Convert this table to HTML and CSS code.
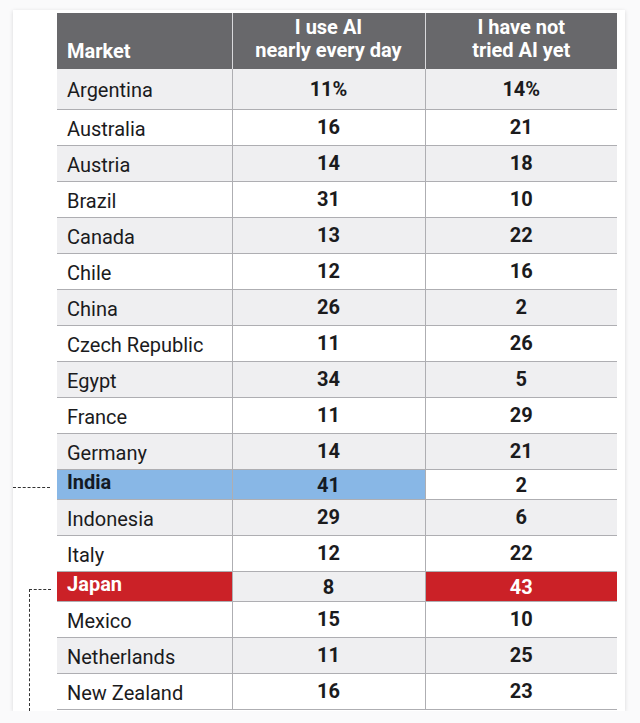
FILE: index.html
```html
<!DOCTYPE html>
<html lang="en">
<head>
<meta charset="utf-8">
<title>AI usage by market</title>
<link rel="stylesheet" href="styles.css">
</head>
<body>
<div class="card">
  <table class="ai-table">
    <colgroup>
      <col class="col-market">
      <col class="col-daily">
      <col class="col-never">
    </colgroup>
    <thead>
      <tr>
        <th class="c-market">Market</th>
        <th class="c-num">I use AI<br>nearly every day</th>
        <th class="c-num">I have not<br>tried AI yet</th>
      </tr>
    </thead>
    <tbody>
      <tr class="odd first"><td class="market">Argentina</td><td>11%</td><td>14%</td></tr>
      <tr><td class="market">Australia</td><td>16</td><td>21</td></tr>
      <tr class="odd"><td class="market">Austria</td><td>14</td><td>18</td></tr>
      <tr><td class="market">Brazil</td><td>31</td><td>10</td></tr>
      <tr class="odd"><td class="market">Canada</td><td>13</td><td>22</td></tr>
      <tr><td class="market">Chile</td><td>12</td><td>16</td></tr>
      <tr class="odd"><td class="market">China</td><td>26</td><td>2</td></tr>
      <tr><td class="market">Czech Republic</td><td>11</td><td>26</td></tr>
      <tr class="odd"><td class="market">Egypt</td><td>34</td><td>5</td></tr>
      <tr><td class="market">France</td><td>11</td><td>29</td></tr>
      <tr class="odd"><td class="market">Germany</td><td>14</td><td>21</td></tr>
      <tr class="short"><td class="market hl-blue note-india">India</td><td class="hl-blue">41</td><td>2</td></tr>
      <tr class="odd"><td class="market">Indonesia</td><td>29</td><td>6</td></tr>
      <tr><td class="market">Italy</td><td>12</td><td>22</td></tr>
      <tr class="odd short"><td class="market hl-red note-japan">Japan</td><td>8</td><td class="hl-red">43</td></tr>
      <tr><td class="market">Mexico</td><td>15</td><td>10</td></tr>
      <tr class="odd"><td class="market">Netherlands</td><td>11</td><td>25</td></tr>
      <tr><td class="market">New Zealand</td><td>16</td><td>23</td></tr>
    </tbody>
  </table>
</div>
</body>
</html>
```

FILE: styles.css
```css
html, body {
  margin: 0;
  padding: 0;
  background: #fafafb;
}

body {
  font-family: Roboto, "Liberation Sans", sans-serif;
  color: #1b1b1d;
}

.card {
  width: 568px;
  margin: 10px 0 0 13px;
  padding: 3px 0 1px 44px;
  background: #ffffff;
  box-shadow: 0 1px 4px rgba(0, 0, 0, 0.14);
}

.ai-table {
  width: 560px;
  border-collapse: collapse;
  table-layout: fixed;
}

.col-market {
  width: 175px;
}

.col-daily {
  width: 193px;
}

.col-never {
  width: 192px;
}

.ai-table thead tr {
  height: 56px;
}

.ai-table th {
  background: #68686b;
  color: #ffffff;
  font-weight: 700;
  font-size: 20px;
  line-height: 23px;
  padding: 0 0 7px 0;
  vertical-align: bottom;
  border-left: 1px solid #d9d9dc;
}

.ai-table th.c-market {
  text-align: left;
  padding-left: 10px;
  border-left: none;
  padding-bottom: 6px;
}

.ai-table th.c-num {
  text-align: center;
}

.ai-table tbody tr {
  height: 36px;
}

.ai-table tbody tr.first {
  height: 40px;
}

.ai-table tbody tr.short {
  height: 30px;
}

.ai-table td {
  padding: 0;
  font-size: 20px;
  line-height: 22px;
  font-weight: 700;
  text-align: center;
  vertical-align: middle;
  border-bottom: 1px solid #aeaeb2;
  border-left: 1px solid #aeaeb2;
  background: #ffffff;
}

.ai-table td.market {
  font-weight: 400;
  text-align: left;
  padding: 3px 0 0 10px;
  border-left: none;
}

.ai-table tr.odd td {
  background: #efeff1;
}

.ai-table tr.short td {
  padding-top: 1px;
}

.ai-table tr.short td.market {
  padding: 0 0 4px 10px;
  font-weight: 700;
}

.ai-table tr td.hl-blue {
  background: #88b7e6;
  color: #141a24;
}

.ai-table tr td.hl-red {
  background: #cb2127;
  color: #ffffff;
}

.note-india,
.note-japan {
  position: relative;
}

.note-india::before {
  content: "";
  position: absolute;
  left: -44px;
  top: 17px;
  width: 37px;
  border-top: 1px dashed #333;
}

.note-japan::before {
  content: "";
  position: absolute;
  left: -28px;
  top: 17px;
  width: 21px;
  height: 121px;
  border-top: 1px dashed #333;
  border-left: 1px dashed #333;
}
```
